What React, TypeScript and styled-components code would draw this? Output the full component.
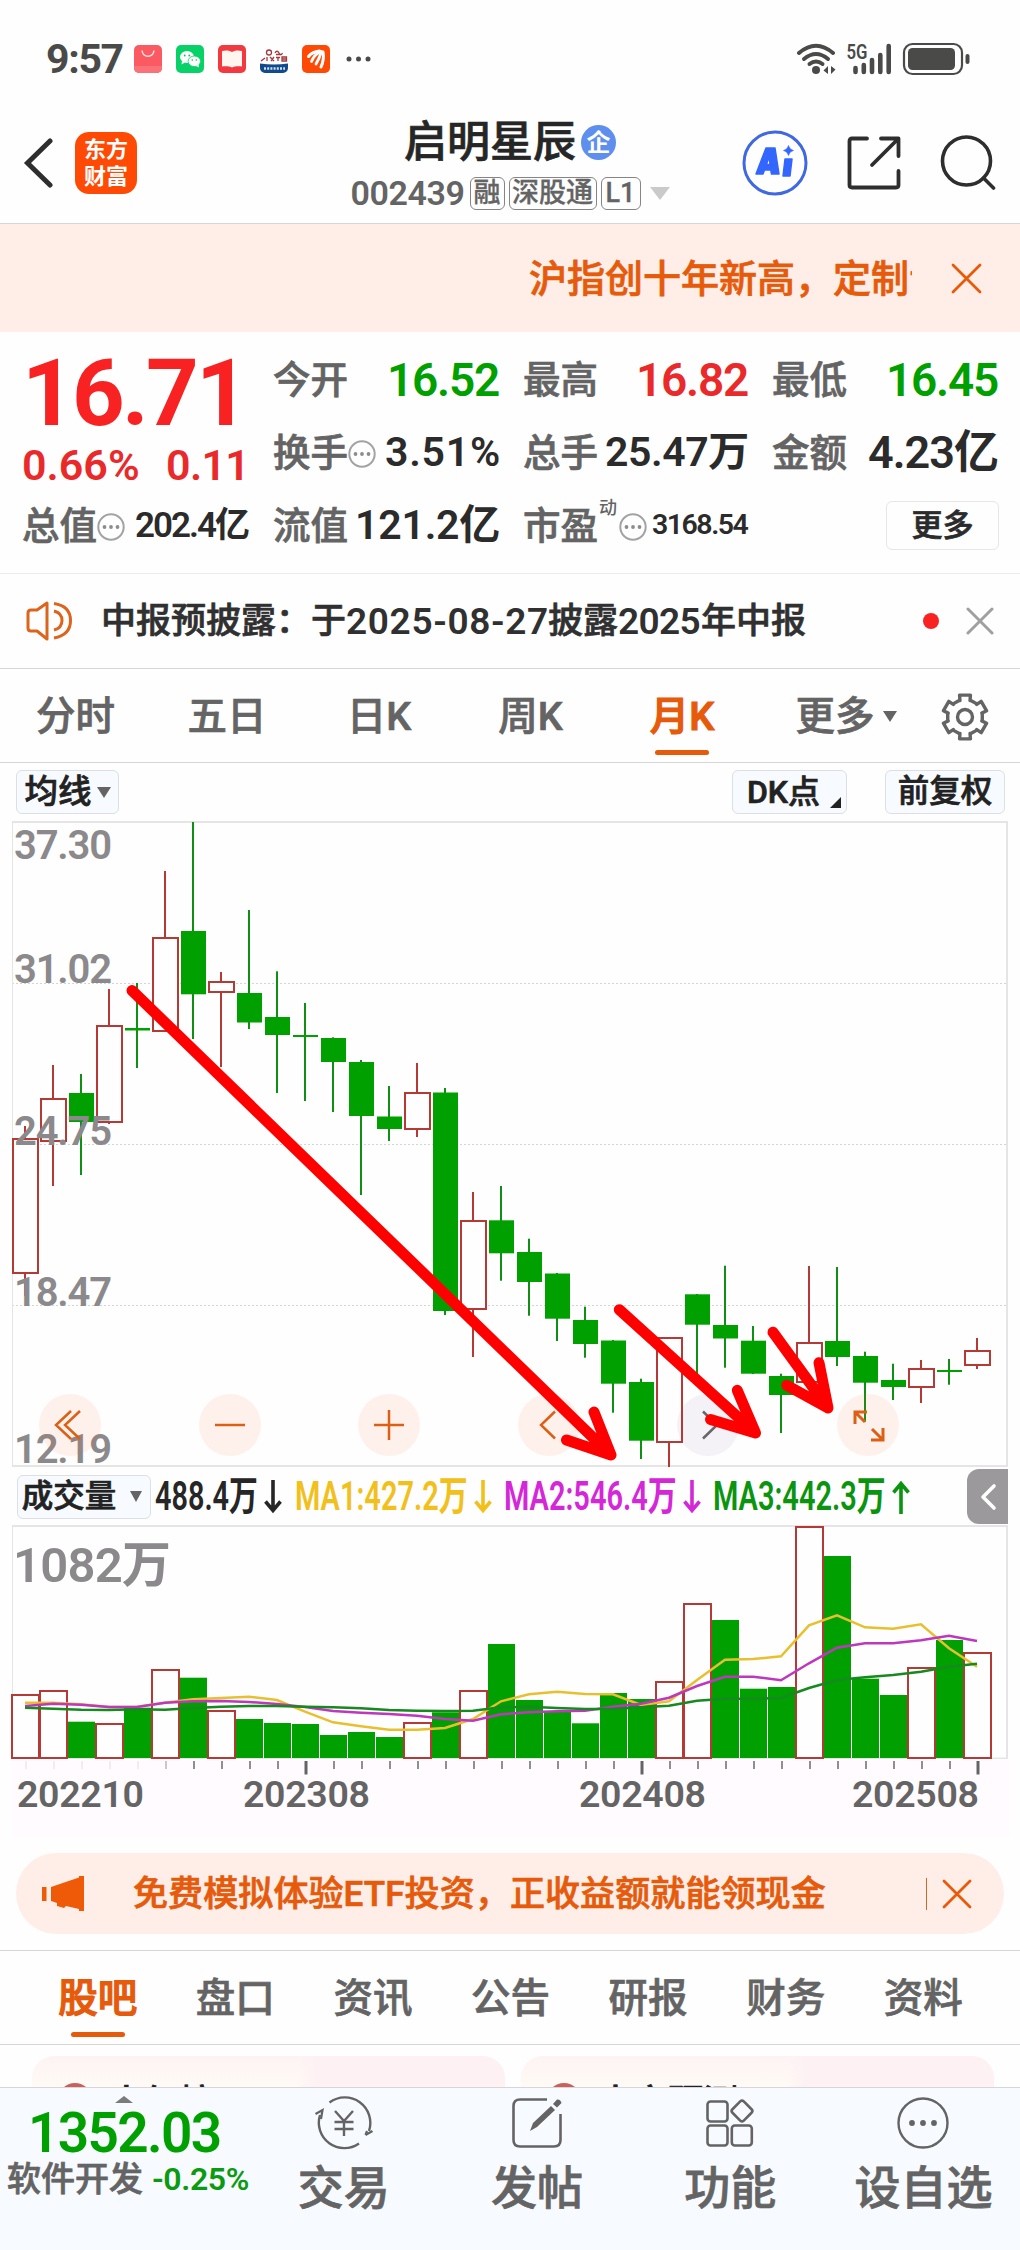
import React, { useLayoutEffect, useRef, useState } from 'react';
import styled, { createGlobalStyle } from 'styled-components';

const C = {
  red: '#f82222',
  red2: '#ea2a2a',
  green: '#00a000',
  orange: '#e65a0c',
  ink: '#2b2b2b',
  gray: '#646464',
  line: '#d6d6d8',
  frame: '#e5e5e7',
  candleRed: '#b53a36',
  peach: '#ffeee7',
};

const Global = createGlobalStyle`
  * { box-sizing: border-box; }
  body {
    margin: 0;
    background: #fefefe;
    font-family: Roboto, "Noto Sans CJK SC", sans-serif;
    font-weight: 500;
    line-height: 1;
    color: ${C.ink};
    -webkit-font-smoothing: antialiased;
    -webkit-text-stroke: 0.7px currentColor;
  }
  svg { display: block; flex: none; }
  svg text { -webkit-text-stroke: 0; }
`;

/* ---------- text that adapts to the room it is given ---------- */

const FitBox = styled.span<{ $w: number }>`
  display: inline-block;
  width: ${(p) => p.$w}px;
  white-space: nowrap;
  flex: none;
  text-align: left;
`;
const FitInner = styled.span`
  display: inline-block;
  transform-origin: 0 50%;
`;

function Fit({ w, squeeze, children }: { w: number; squeeze?: boolean; children: string }) {
  const ref = useRef<HTMLSpanElement>(null);
  const [natural, setNatural] = useState(0);
  useLayoutEffect(() => {
    if (ref.current) setNatural(ref.current.offsetWidth);
  }, []);
  let style: React.CSSProperties = {};
  if (natural) {
    style = squeeze
      ? { transform: `scaleX(${w / natural})` }
      : { letterSpacing: (w - natural) / (children.length - 1) };
  }
  return (
    <FitBox $w={w}>
      <FitInner ref={ref} style={style}>
        {children}
      </FitInner>
    </FitBox>
  );
}

const Num = styled.span<{ $s: number; $c?: string; $b?: number }>`
  font-size: ${(p) => p.$s}px;
  color: ${(p) => p.$c || C.ink};
  font-weight: ${(p) => p.$b || 600};
  display: inline-flex;
  -webkit-text-stroke: 0;
`;

/* ---------- header ---------- */

const Page = styled.div`
  width: 1020px;
  height: 2250px;
  overflow: hidden;
  display: flex;
  flex-direction: column;
  background: #fefefe;
`;

const StatusBar = styled.div`
  height: 118px;
  flex: none;
  display: flex;
  align-items: center;
  padding: 0 48px 0 46px;
`;
const AppIcons = styled.div`
  display: flex;
  gap: 14px;
  margin-left: 10px;
`;
const MoreDots = styled.svg`
  margin-left: 16px;
`;
const StatusRight = styled.div`
  margin-left: auto;
  display: flex;
  align-items: center;
`;

const NavBar = styled.div`
  height: 106px;
  flex: none;
  display: grid;
  grid-template-columns: 340px 340px 1fr;
  border-bottom: 1px solid ${C.line};
`;
const NavLeft = styled.div`
  display: flex;
  align-items: center;
  padding: 0 0 16px 23px;
  gap: 22px;
`;
const Brand = styled.div`
  width: 62px;
  height: 62px;
  border-radius: 14px;
  background: #ff4a05;
  color: #fff;
  font-size: 22px;
  font-weight: 700;
  line-height: 27px;
  text-align: center;
  padding-top: 4px;
  -webkit-text-stroke: 0;
`;
const NavMid = styled.div`
  display: flex;
  flex-direction: column;
  align-items: center;
`;
const Title = styled.div`
  display: flex;
  align-items: center;
  font-size: 43px;
  gap: 5px;
  height: 48px;
  margin-bottom: 10px;
  color: #262626;
`;
const Badge = styled.span`
  width: 35px;
  height: 35px;
  border-radius: 50%;
  background: #5f8fee;
  color: #fff;
  font-size: 24px;
  font-weight: 700;
  line-height: 36px;
  text-align: center;
  -webkit-text-stroke: 0;
`;
const Sub = styled.div`
  display: flex;
  align-items: center;
  color: ${C.gray};
  -webkit-text-stroke: 0.3px currentColor;
`;
const Tag = styled.span<{ $w: number }>`
  width: ${(p) => p.$w}px;
  height: 33px;
  margin-left: 4px;
  border: 1.5px solid #858585;
  border-radius: 6px;
  font-size: 27px;
  line-height: 31px;
  text-align: center;
  white-space: nowrap;
`;
const NavRight = styled.div`
  display: flex;
  align-items: center;
  padding: 0 0 16px 62px;
  gap: 39px;
`;

const Caret = styled.i<{ $w: number; $h: number; $c: string; $ml?: number }>`
  width: 0;
  height: 0;
  flex: none;
  margin-left: ${(p) => p.$ml || 0}px;
  border-left: ${(p) => p.$w / 2}px solid transparent;
  border-right: ${(p) => p.$w / 2}px solid transparent;
  border-top: ${(p) => p.$h}px solid ${(p) => p.$c};
`;

const Ticker = styled.div`
  height: 108px;
  flex: none;
  display: flex;
  align-items: center;
  background: ${C.peach};
  color: ${C.orange};
  font-size: 38px;
  padding-left: 529px;
`;
const TickerText = styled.div`
  width: 383px;
  overflow: hidden;
  white-space: nowrap;
  padding: 8px 0 6px;
  margin-right: 39px;
`;

/* ---------- quote ---------- */

const Quote = styled.div`
  height: 242px;
  flex: none;
  display: grid;
  grid-template-columns: 228px 227px 226px 227px;
  grid-template-rows: 73px 73px 73px;
  column-gap: 23px;
  padding: 11px 0 0 22px;
  border-bottom: 1px solid #ebebed;
`;
const Price = styled.div`
  grid-row: span 2;
  display: flex;
  flex-direction: column;
  align-items: flex-start;
`;
const BigPrice = styled.div`
  padding: 5px 0 0 0;
  height: 101px;
`;
const Change = styled.div`
  display: flex;
  gap: 26px;
`;
const Cell = styled.div`
  display: flex;
  align-items: center;
  justify-content: space-between;
`;
const Label = styled.span`
  display: inline-flex;
  align-items: center;
  padding-top: 2px;
  color: ${C.gray};
  font-size: 37.5px;
  white-space: nowrap;
`;
const Sup = styled.sup`
  font-size: 18px;
  align-self: flex-start;
  margin: -9px 2px 0 1px;
  -webkit-text-stroke: 0;
`;
const MoreBtn = styled.div`
  width: 113px;
  height: 49px;
  border: 1.5px solid #e6e5e8;
  border-radius: 6px;
  margin-left: auto;
  font-size: 31px;
  line-height: 47px;
  text-align: center;
`;

const News = styled.div`
  height: 95px;
  flex: none;
  display: flex;
  align-items: center;
  padding-left: 26px;
  border-bottom: 1px solid ${C.line};
`;
const NewsText = styled.div`
  width: 746px;
  margin-left: 29px;
  display: flex;
  align-items: center;
  font-size: 35px;
  color: #303030;
`;
const Dot = styled.i`
  width: 16px;
  height: 16px;
  border-radius: 50%;
  background: ${C.red};
  margin-left: 76px;
  margin-right: 27px;
`;

/* ---------- tabs ---------- */

const Tabs = styled.div<{ $pad?: string; $top?: boolean }>`
  height: ${(p) => (p.$top ? 95 : 94)}px;
  flex: none;
  display: flex;
  padding: ${(p) => p.$pad || 0};
  border-bottom: 1px solid ${C.line};
  border-top: ${(p) => (p.$top ? `1px solid ${C.line}` : 'none')};
`;
const Tab = styled.div<{ $w: number; $on?: boolean }>`
  width: ${(p) => p.$w}px;
  display: flex;
  align-items: center;
  justify-content: center;
  position: relative;
  padding-top: 2px;
  font-size: 39.5px;
  color: ${(p) => (p.$on ? C.orange : C.gray)};
  -webkit-text-stroke-width: ${(p) => (p.$on ? 1.2 : 0.7)}px;
  &::after {
    content: '';
    display: ${(p) => (p.$on ? 'block' : 'none')};
    position: absolute;
    left: 50%;
    bottom: 7px;
    width: 54px;
    height: 5px;
    margin-left: -27px;
    border-radius: 3px;
    background: ${C.orange};
  }
`;

/* ---------- chart ---------- */

const ChartBar = styled.div`
  height: 58px;
  flex: none;
  display: flex;
  align-items: center;
  padding: 0 15px 0 16px;
`;
const Chip = styled.div<{ $w: number; $ml?: string; $fs: number; $pr?: number }>`
  position: relative;
  width: ${(p) => p.$w}px;
  height: 44px;
  flex: none;
  display: flex;
  align-items: center;
  justify-content: center;
  padding-right: ${(p) => p.$pr || 0}px;
  margin-left: ${(p) => p.$ml || 0};
  border: 1px solid #dcdfe6;
  border-radius: 6px;
  background: #f7faff;
  font-size: ${(p) => p.$fs}px;
  color: #222;
  white-space: nowrap;
`;
const Corner = styled.i`
  position: absolute;
  right: 5px;
  bottom: 5px;
  border-left: 11px solid transparent;
  border-bottom: 11px solid #222;
`;
const ChartWrap = styled.div`
  position: relative;
  height: 647px;
  flex: none;
`;
const Controls = styled.div`
  position: absolute;
  left: 39px;
  width: 860px;
  bottom: 12px;
  display: flex;
  justify-content: space-between;
`;
const Round = styled.div<{ $dim?: boolean }>`
  width: 62px;
  height: 62px;
  border-radius: 50%;
  background: ${(p) => (p.$dim ? 'rgba(120,70,150,0.07)' : 'rgba(255,90,30,0.08)')};
`;
const Overlay = styled.svg`
  position: absolute;
  left: 0;
  top: 0;
`;
const IndicatorBar = styled.div`
  height: 57px;
  flex: none;
  display: flex;
  align-items: center;
  padding: 0 12px 0 17px;
`;
const Indicator = styled.div<{ $c: string; $ml: number }>`
  display: flex;
  align-items: center;
  gap: 6px;
  margin-left: ${(p) => p.$ml}px;
  font-size: 40px;
  font-weight: 600;
  -webkit-text-stroke: 0;
  color: ${(p) => p.$c};
`;
const Collapse = styled.div`
  width: 41px;
  height: 55px;
  margin-left: auto;
  border-radius: 12px 0 0 12px;
  background: #9b999c;
  display: flex;
  align-items: center;
  justify-content: center;
`;
const Axis = styled.div`
  height: 78px;
  flex: none;
  margin: 0 11px 0 12px;
  background: #fffbff;
`;

/* ---------- lower part ---------- */

const Promo = styled.div`
  height: 81px;
  flex: none;
  margin: 16px 26px 16px 16px;
  width: 988px;
  border-radius: 41px;
  background: ${C.peach};
  color: ${C.orange};
  display: flex;
  align-items: center;
  padding-left: 26px;
`;
const PromoText = styled.div`
  font-size: 35px;
  margin-left: 48px;
  padding-top: 2px;
  width: 694px;
`;
const Bar = styled.i`
  width: 1px;
  height: 32px;
  background: #c9692e;
  margin: 0 15px 0 99px;
`;
const Cards = styled.div`
  height: 42px;
  flex: none;
  overflow: hidden;
  display: flex;
  gap: 16px;
  padding: 11px 26px 0 32px;
`;
const Card = styled.div`
  width: 473px;
  height: 120px;
  border-radius: 22px;
  background: linear-gradient(90deg, transparent 56%, #fdf1f4 60%), linear-gradient(180deg, #fdf3f4, #fffaf5 30px);
  display: flex;
  align-items: flex-start;
  padding: 27px 0 0 26px;
  font-size: 35px;
  color: #222;
`;
const CardDot = styled.i`
  width: 34px;
  height: 34px;
  border-radius: 50%;
  background: #c9605c;
  margin-right: 17px;
`;
const CardTitle = styled.span`
  padding-top: 3px;
`;

const BottomNav = styled.div`
  flex: 1;
  display: flex;
  background: #f7faff;
  border-top: 1px solid ${C.line};
`;
const IndexBox = styled.div`
  width: 247px;
  display: flex;
  flex-direction: column;
  align-items: flex-start;
  padding: 8px 0 0 7px;
`;
const UpMark = styled.i`
  width: 0;
  height: 0;
  margin-left: 108px;
  border-left: 9.5px solid transparent;
  border-right: 9.5px solid transparent;
  border-bottom: 7px solid #7b7b7b;
`;
const IndexValue = styled.div`
  margin: 3px 0 0 21px;
  height: 55px;
`;
const IndexRow = styled.div`
  display: flex;
  align-items: center;
  gap: 9px;
  margin-top: 1px;
  font-size: 34px;
  color: ${C.gray};
  white-space: nowrap;
`;
const NavItem = styled.div`
  flex: 1;
  display: flex;
  flex-direction: column;
  align-items: center;
  padding-top: 5px;
  gap: 12px;
  font-size: 46px;
  color: ${C.gray};
  svg { height: 60px; }
`;

/* ---------- icons ---------- */

const Cross = ({ s, c, w }: { s: number; c: string; w: number }) => (
  <svg width={s} height={s} viewBox={`0 0 ${s} ${s}`} stroke={c} strokeWidth={w} strokeLinecap="round">
    <path d={`M2 2L${s - 2} ${s - 2}M${s - 2} 2L2 ${s - 2}`} />
  </svg>
);

const Info = () => (
  <svg width="28" height="28" viewBox="0 0 28 28">
    <circle cx="14" cy="14" r="12.7" fill="none" stroke="#a3a3a3" strokeWidth="2" />
    {[7.5, 14, 20.5].map((x) => (
      <circle key={x} cx={x} cy="14" r="1.9" fill="#8c8c8c" />
    ))}
  </svg>
);

function Gear() {
  const pts: string[] = [];
  for (let i = 0; i < 6; i++) {
    const base = -90 + i * 60;
    [
      [-21, 17.5],
      [-17, 17.2],
      [-14, 22.5],
      [14, 22.5],
      [17, 17.2],
      [21, 17.5],
    ].forEach(([a, r]) => {
      const t = ((base + a) * Math.PI) / 180;
      pts.push(`${(25 + r * Math.cos(t)).toFixed(2)},${(25 + r * Math.sin(t)).toFixed(2)}`);
    });
  }
  return (
    <svg width="50" height="50" viewBox="0 0 50 50" fill="none" stroke={C.gray} strokeWidth="3.4" strokeLinejoin="round">
      <polygon points={pts.join(' ')} />
      <circle cx="25" cy="25" r="7.5" />
    </svg>
  );
}

const MaArrow = ({ up }: { up?: boolean }) => (
  <svg width="18" height="34" viewBox="0 0 18 34" fill="none" stroke="currentColor" strokeWidth="3.6">
    {up ? <path d="M9 34V3M1.5 12.5L9 3.5L16.5 12.5" /> : <path d="M9 0V31M1.5 21.5L9 30.5L16.5 21.5" />}
  </svg>
);

const StatusApps = () => (
  <AppIcons>
    <svg width="28" height="28" viewBox="0 0 28 28">
      <rect width="28" height="28" rx="5" fill="#fb5a62" />
      <path d="M0 21H28V23a5 5 0 0 1-5 5H5a5 5 0 0 1-5-5Z" fill="#fb7178" />
      <path d="M8 5.5C9 13 19 13 20 5.5" fill="none" stroke="#ffe3e0" strokeWidth="1.5" />
    </svg>
    <svg width="28" height="28" viewBox="0 0 28 28">
      <rect width="28" height="28" rx="5" fill="#07d267" />
      <ellipse cx="11" cy="12" rx="7" ry="6" fill="#fff" />
      <path d="M6 16L5.500 19.500L9 17.500Z" fill="#fff" />
      <ellipse cx="18.300" cy="16.300" rx="6.200" ry="5.300" fill="#fff" stroke="#07d267" strokeWidth=".8" />
      <path d="M20 21L23 22.500L22.500 19Z" fill="#fff" />
      <g fill="#07c160">
        <circle cx="8.700" cy="10.500" r=".9" />
        <circle cx="13.300" cy="10.500" r=".9" />
        <circle cx="16.300" cy="15" r=".8" />
        <circle cx="20.300" cy="15" r=".8" />
      </g>
    </svg>
    <svg width="28" height="28" viewBox="0 0 28 28">
      <rect width="28" height="28" rx="5" fill="#f4383f" />
      <path d="M4 6C8 5 12 5.500 14 7C16 5.500 20 5 24 6V21.500C20 21 16 21.500 14 22.500C12 21.500 8 21 4 21.500Z" fill="#fff6f0" />
    </svg>
    <svg width="28" height="28" viewBox="0 0 28 28">
      <g fill="none" stroke="#a3383c" strokeWidth="1.300">
        <circle cx="9" cy="7.500" r="2.500" />
        <path d="M15 8q2-3.500 4 0t3.500 0M16 9.500h5" />
        <path d="M1 16l4-3M7 12v4M10 12l4 4M14 12l-3 4M16 12.500h4M18 12v4M22 12h4.500v4h-4.500zM22 14h4" />
      </g>
      <path d="M0 18.500Q14 20.500 28 18.500V23a5 5 0 0 1-5 5H5a5 5 0 0 1-5-5Z" fill="#124a8c" />
      <path d="M4 23.500h21" stroke="#cfe0f2" strokeWidth="2.500" strokeDasharray="2 1.200" />
    </svg>
    <svg width="28" height="28" viewBox="0 0 28 28">
      <rect width="28" height="28" rx="5" fill="#ff4a05" />
      <g fill="none" stroke="#fff" strokeLinecap="round">
        <path d="M6.500 11.500Q10 7 17.500 6" strokeWidth="3" />
        <path d="M9.500 16.500Q12 10 18.500 6.500" strokeWidth="2.800" />
        <path d="M14 19Q17.500 13 19.500 6.500" strokeWidth="2.800" />
        <path d="M19 22Q22.500 14 21 7" strokeWidth="3" />
      </g>
    </svg>
  </AppIcons>
);

const StatusSignals = () => (
  <StatusRight>
    <svg width="176" height="36" viewBox="796 41 176 36">
      <g fill="none" stroke="#4a4b49" strokeWidth="4" strokeLinecap="round">
        <path d="M799 53Q816 38.500 833 53" />
        <path d="M804 59Q816 49 828 59" />
        <path d="M809.500 64Q816 59 822.500 64" />
      </g>
      <circle cx="816" cy="70" r="4" fill="#4a4b49" />
      <path d="M828 66V74L823.500 70.500ZM831 66V74L835.500 69.500Z" fill="#4a4b49" />
      <text x="846.500" y="59" fontSize="20.500" fontWeight="600" fill="#4a4b49" textLength="21" lengthAdjust="spacingAndGlyphs">5G</text>
      <g stroke="#4a4b49" strokeWidth="4.600" strokeLinecap="round">
        <path d="M855.500 68V72M863.800 65V72M872 60V72M880.300 55V72M888.700 46V72" />
      </g>
      <rect x="904" y="44" width="58" height="30" rx="8.500" fill="none" stroke="#4a4b49" strokeWidth="2.200" />
      <rect x="908" y="48" width="47" height="22" rx="4.500" fill="#4a4b49" />
      <rect x="965.500" y="54" width="4" height="10" rx="2" fill="#4a4b49" />
    </svg>
  </StatusRight>
);

/* ---------- chart data: pixel rows of high, body top, body bottom, low ---------- */

type K = [string, number, number, number, number];
const candles: K[] = [
  ['r', 1126, 1138, 1274, 1296],
  ['r', 1065, 1098, 1142, 1186],
  ['g', 1074, 1093, 1122, 1175],
  ['r', 989, 1025, 1123, 1124],
  ['g', 983, 1028, 1030.5, 1068],
  ['r', 871, 937, 1032, 1032],
  ['g', 822, 931, 994.3, 1039],
  ['r', 972, 981, 993, 1067],
  ['g', 910, 993, 1022.5, 1029],
  ['g', 971.3, 1017, 1035, 1093],
  ['g', 1003, 1035, 1037, 1101],
  ['g', 1037.3, 1038, 1062, 1112],
  ['g', 1060, 1062, 1116, 1195],
  ['g', 1086, 1116.5, 1129, 1141],
  ['r', 1063, 1092, 1130, 1137],
  ['g', 1088, 1092.5, 1311, 1315],
  ['r', 1192, 1220, 1310, 1357],
  ['g', 1186, 1220.3, 1253.3, 1280.7],
  ['g', 1238.7, 1252, 1282, 1315.7],
  ['g', 1273, 1273.5, 1318.7, 1341],
  ['g', 1306.7, 1320, 1344, 1357.7],
  ['g', 1340, 1340.5, 1383.7, 1412.7],
  ['g', 1378.7, 1382, 1440.7, 1459],
  ['r', 1338, 1337, 1443, 1467],
  ['g', 1294, 1294.3, 1324.7, 1377],
  ['g', 1265.7, 1325, 1338.5, 1367.7],
  ['g', 1326, 1340.7, 1373.7, 1374],
  ['g', 1373.7, 1376, 1395, 1433],
  ['r', 1266, 1342, 1383, 1383],
  ['g', 1267, 1341, 1357, 1366],
  ['g', 1351.7, 1356, 1382.7, 1421.7],
  ['g', 1363.7, 1380, 1387, 1400],
  ['r', 1360, 1368, 1388, 1403],
  ['g', 1359, 1370, 1372, 1384.7],
  ['r', 1338, 1350, 1366, 1369],
];
const volumes: [string, number][] = [
  ['r', 1694], ['r', 1690], ['g', 1721.7], ['r', 1723], ['g', 1707.7], ['r', 1669], ['g', 1677.7],
  ['r', 1710], ['g', 1719], ['g', 1723], ['g', 1724], ['g', 1735], ['g', 1732], ['g', 1737],
  ['r', 1722], ['g', 1712.3], ['r', 1690], ['g', 1644], ['g', 1700], ['g', 1712], ['g', 1723.3],
  ['g', 1693], ['g', 1699], ['r', 1681], ['r', 1603], ['g', 1620], ['g', 1688.7], ['g', 1687],
  ['r', 1526], ['g', 1556], ['g', 1678.7], ['g', 1695], ['r', 1667], ['g', 1640], ['r', 1652],
];
const ma1 = [728, 728, 733, 741, 740, 728, 718, 714, 710, 720, 755, 787, 799, 809, 809, 804, 777, 724, 703, 695, 702, 703, 735, 724, 660, 599, 597, 589, 496, 466, 502, 506, 493, 565, 620];
const ma2 = [738, 731, 734, 741, 741, 728, 724, 723, 726, 732, 741, 753, 758, 762, 767, 777, 782, 763, 757, 754, 752, 740, 731, 713, 678, 650, 650, 661, 610, 563, 550, 550, 541, 527, 543];
const ma3 = [743, 746, 749, 750, 748, 749, 744, 740, 738, 738, 740, 742, 745, 750, 752, 753, 752, 742, 740, 744, 747, 747, 742, 737, 722, 716, 716, 714, 684, 660, 652, 645, 635, 620, 611];

const cx = (i: number) => 25 + 28 * i;
const poly = (v: number[]) => v.map((y, i) => `${cx(i)},${(1460 + y / 3).toFixed(1)}`).join(' ');

const AxisText = ({ x, y, s, w, c, children }: { x: number; y: number; s: number; w: number; c: string; children: string }) => (
  <text x={x} y={y} fontSize={s} fontWeight="600" fill={c} textLength={w} lengthAdjust="spacing">
    {children}
  </text>
);

const PriceChart = () => (
  <svg width="1020" height="647" viewBox="0 821 1020 647">
    {[983.5, 1144.5, 1305.5].map((y) => (
      <path key={y} d={`M12 ${y}H1007`} stroke="#d4d4d4" strokeWidth="1" strokeDasharray="2 2" />
    ))}
    <path d="M12.500 822V1466" stroke={C.frame} strokeWidth="1" />
    <path d="M12 822H1007V1466H12" fill="none" stroke={C.frame} strokeWidth="2" />
    {candles.map(([t, hi, top, bot, lo], i) => {
      const x = cx(i);
      return t === 'g' ? (
        <g key={i} fill={C.green}>
          <rect x={x - 1} y={hi} width="2" height={lo - hi} fill="#0f8f14" />
          <rect x={x - 12} y={top} width="25" height={bot - top} />
        </g>
      ) : (
        <g key={i} stroke={C.candleRed} strokeWidth="2" fill="none">
          <path d={`M${x} ${hi}V${top}M${x} ${bot}V${lo}`} />
          <rect x={x - 12} y={top + 1} width="25" height={bot - top - 2} fill="#fefefe" />
        </g>
      );
    })}
    <AxisText x={14} y={859} s={40} w={98} c="#8b898b">37.30</AxisText>
    <AxisText x={14} y={983} s={40} w={98} c="#8b898b">31.02</AxisText>
    <AxisText x={14} y={1145} s={40} w={98} c="#8b898b">24.75</AxisText>
    <AxisText x={14} y={1306} s={40} w={98} c="#8b898b">18.47</AxisText>
    <AxisText x={14} y={1463} s={40} w={98} c="#8b898b">12.19</AxisText>
  </svg>
);

const glyphs = [
  'M32 17L17 31L32 45M41 17L26 31L41 45',
  'M16 31H46',
  'M16 31H46M31 16V46',
  'M37 17.500L23 31L37 44.500',
  'M26 17.500L40 31L26 44.500',
  'M18 30V18H30M18.500 18.500L28 28M34 46H46V34M45.500 45.500L35 35',
];

const arrows = [
  'M132 990.500L611 1455M594 1412L611 1455L566.500 1440',
  'M619.300 1309.700L755.500 1433M737.300 1390.300L755.500 1433L710.500 1419.500',
  'M773 1332.300L828 1408M819 1362.700L828 1408L786.700 1385.300',
];

const VolumeChart = () => (
  <svg width="1020" height="234" viewBox="0 1525 1020 234">
    <path d="M12.500 1526V1758" stroke={C.frame} strokeWidth="1" />
    <path d="M12 1526H1007V1758.500H12" fill="none" stroke={C.frame} strokeWidth="2" />
    {volumes.map(([t, top], i) => {
      const x = cx(i);
      return t === 'g' ? (
        <rect key={i} x={x - 13} y={top} width="27" height={1758 - top} fill={C.green} />
      ) : (
        <rect key={i} x={x - 13} y={top + 1} width="27" height={1757 - top} fill="#fefefe" stroke={C.candleRed} strokeWidth="2" />
      );
    })}
    <g fill="none" strokeWidth="2.500">
      <polyline points={poly(ma1)} stroke="#e8c02e" />
      <polyline points={poly(ma2)} stroke="#bd38bd" />
      <polyline points={poly(ma3)} stroke="#168a1e" />
    </g>
    <AxisText x={13} y={1582} s={49} w={158} c="#8b898b">1082万</AxisText>
  </svg>
);

const TimeAxis = () => (
  <Axis>
    <svg width="997" height="78" viewBox="12 1759 997 78">
      {candles.map((_, i) => {
        const major = i % 12 === 10;
        return (
          <path
            key={i}
            d={`M${cx(i) + 1} 1761V${major ? 1774.5 : 1769}`}
            stroke={i < 5 ? '#f1edf1' : i === 5 ? '#c9c9c9' : major ? C.gray : '#8f8f8f'}
            strokeWidth={major ? 3 : 2}
          />
        );
      })}
      <AxisText x={17} y={1807} s={37.5} w={127} c={C.gray}>202210</AxisText>
      <AxisText x={243} y={1807} s={37.5} w={127} c={C.gray}>202308</AxisText>
      <AxisText x={579} y={1807} s={37.5} w={127} c={C.gray}>202408</AxisText>
      <AxisText x={852} y={1807} s={37.5} w={127} c={C.gray}>202508</AxisText>
    </svg>
  </Axis>
);

export default function App() {
  return (
    <Page>
      <Global />
      <StatusBar>
        <Num $s={41} $b={700} $c="#4a4b49"><Fit w={78}>9:57</Fit></Num>
        <StatusApps />
        <MoreDots width="26" height="6" viewBox="0 0 26 6" fill="#4a4b49">
          <circle cx="3" cy="3" r="2.5" /><circle cx="12.500" cy="3" r="2.5" /><circle cx="22" cy="3" r="2.5" />
        </MoreDots>
        <StatusSignals />
      </StatusBar>
      <NavBar>
        <NavLeft>
          <svg width="30" height="52" viewBox="0 0 30 52" fill="none" stroke="#2e2e2e" strokeWidth="5" strokeLinecap="round">
            <path d="M27 4L4.500 26L27 48" />
          </svg>
          <Brand>东方<br />财富</Brand>
        </NavLeft>
        <NavMid>
          <Title>启明星辰<Badge>企</Badge></Title>
          <Sub>
            <Num $s={34} $c={C.gray}><Fit w={115}>002439</Fit></Num>
            <Tag $w={35}>融</Tag>
            <Tag $w={88}>深股通</Tag>
            <Tag $w={40}>L1</Tag>
            <Caret $w={20} $h={13} $c="#cacaca" $ml={9} />
          </Sub>
        </NavMid>
        <NavRight>
          <svg width="66" height="66" viewBox="0 0 66 66">
            <circle cx="33" cy="33" r="31" fill="none" stroke="#4068e0" strokeWidth="3" />
            <g fill="#3366ff" stroke="#3366ff" strokeWidth="1.500" strokeLinejoin="round">
              <path fillRule="evenodd" d="M14 44L24 18H33L37 44H29.500L28.800 40H22.500L21 44ZM24.500 34.500H28L27 26.500Z" />
              <path d="M43 29H50L48 46H41Z" />
              <path d="M46.500 15.500Q47.500 19.500 51.500 20.500Q47.500 21.500 46.500 25.500Q45.500 21.500 41.500 20.500Q45.500 19.500 46.500 15.500Z" strokeWidth=".6" />
            </g>
          </svg>
          <svg width="54" height="54" viewBox="0 0 54 54" fill="none" stroke="#2e2e2e" strokeWidth="3.800" strokeLinecap="round" strokeLinejoin="round">
            <path d="M20 2.500H5Q2.500 2.500 2.500 5V49Q2.500 51.500 5 51.500H49Q51.500 51.500 51.500 49V35M34 2.500H51.500V20M50.500 3.500L25 29" />
          </svg>
          <svg width="56" height="58" viewBox="0 0 56 58" fill="none" stroke="#2e2e2e" strokeWidth="3.600" strokeLinecap="round">
            <circle cx="26.500" cy="27" r="24" /><path d="M43.500 44L53.500 54" />
          </svg>
        </NavRight>
      </NavBar>
      <Ticker>
        <TickerText>沪指创十年新高，定制专</TickerText>
        <Cross s={31} c={C.orange} w={2.8} />
      </Ticker>
      <Quote>
        <Price>
          <BigPrice><Num $s={92} $c={C.red} $b={700}><Fit w={227}>16.71</Fit></Num></BigPrice>
          <Change>
            <Num $s={43} $c={C.red2}><Fit w={118}>0.66%</Fit></Num>
            <Num $s={43} $c={C.red2}><Fit w={84}>0.11</Fit></Num>
          </Change>
        </Price>
        <Cell><Label>今开</Label><Num $s={46} $c={C.green}><Fit w={113}>16.52</Fit></Num></Cell>
        <Cell><Label>最高</Label><Num $s={46} $c={C.red2}><Fit w={113}>16.82</Fit></Num></Cell>
        <Cell><Label>最低</Label><Num $s={46} $c={C.green}><Fit w={113}>16.45</Fit></Num></Cell>
        <Cell><Label>换手<Info /></Label><Num $s={41}><Fit w={115}>3.51%</Fit></Num></Cell>
        <Cell><Label>总手</Label><Num $s={41}><Fit w={144}>25.47万</Fit></Num></Cell>
        <Cell><Label>金额</Label><Num $s={45}><Fit w={131}>4.23亿</Fit></Num></Cell>
        <Cell><Label>总值<Info /></Label><Num $s={35}><Fit w={115}>202.4亿</Fit></Num></Cell>
        <Cell><Label>流值</Label><Num $s={41}><Fit w={145}>121.2亿</Fit></Num></Cell>
        <Cell><Label>市盈<Sup>动</Sup><Info /></Label><Num $s={28.5}><Fit w={97}>3168.54</Fit></Num></Cell>
        <Cell><MoreBtn>更多</MoreBtn></Cell>
      </Quote>
      <News>
        <svg width="46" height="42" viewBox="0 0 46 42" fill="none" stroke="#dc641c" strokeWidth="3" strokeLinejoin="round">
          <path d="M2 13Q2 10 5 10H11L21 3V39L11 31H5Q2 31 2 28ZM28 11Q36 13 36 20.500Q36 28 28 30M28 3.500Q44.500 6 44.500 20.500Q44.500 35 28 38" />
        </svg>
        <NewsText>
          中报预披露：于
          <Num $s={37} $c="#303030"><Fit w={202}>2025-08-27</Fit></Num>
          披露
          <Num $s={37} $c="#303030"><Fit w={83}>2025</Fit></Num>
          年中报
        </NewsText>
        <Dot />
        <Cross s={28} c="#a0a0a0" w={3} />
      </News>
      <Tabs>
        <Tab $w={151}>分时</Tab>
        <Tab $w={152}>五日</Tab>
        <Tab $w={152}>日K</Tab>
        <Tab $w={151}>周K</Tab>
        <Tab $w={152} $on>月K</Tab>
        <Tab $w={176}>更多<Caret $w={14} $h={11} $c={C.gray} $ml={8} /></Tab>
        <Tab $w={61}><Gear /></Tab>
      </Tabs>
      <ChartBar>
        <Chip $w={103} $fs={33.5}>均线<Caret $w={14} $h={11} $c={C.gray} $ml={5} /></Chip>
        <Chip $w={115} $fs={32} $ml="auto" $pr={12}>DK点<Corner /></Chip>
        <Chip $w={120} $fs={31.5} $ml="38px">前复权</Chip>
      </ChartBar>
      <ChartWrap>
        <PriceChart />
        <Controls>
          {glyphs.map((d, i) => (
            <Round key={d} $dim={i === 4}>
              <svg width="62" height="62" viewBox="0 0 62 62" fill="none" stroke={i === 4 ? '#66676a' : '#dc5f16'} strokeWidth={i === 5 ? 3 : 2.5}>
                <path d={d} />
              </svg>
            </Round>
          ))}
        </Controls>
        <Overlay width="1020" height="647" viewBox="0 821 1020 647" fill="none" stroke="#ff0000" strokeWidth="11" strokeLinecap="round" strokeLinejoin="round">
          {arrows.map((d) => (
            <path key={d} d={d} />
          ))}
        </Overlay>
      </ChartWrap>
      <IndicatorBar>
        <Chip $w={134} $fs={31.5} $pr={4}>成交量<Caret $w={13} $h={11} $c={C.gray} $ml={14} /></Chip>
        <Indicator $c="#262626" $ml={4}><Fit w={103} squeeze>488.4万</Fit><MaArrow /></Indicator>
        <Indicator $c="#f2c01c" $ml={13}><Fit w={173} squeeze>MA1:427.2万</Fit><MaArrow /></Indicator>
        <Indicator $c="#d428d8" $ml={12}><Fit w={173} squeeze>MA2:546.4万</Fit><MaArrow /></Indicator>
        <Indicator $c="#0b940f" $ml={12}><Fit w={173} squeeze>MA3:442.3万</Fit><MaArrow up /></Indicator>
        <Collapse>
          <svg width="18" height="28" viewBox="0 0 18 28" fill="none" stroke="#fff" strokeWidth="3.600" strokeLinecap="round" strokeLinejoin="round">
            <path d="M15 3L4 14L15 25" />
          </svg>
        </Collapse>
      </IndicatorBar>
      <VolumeChart />
      <TimeAxis />
      <Promo>
        <svg width="43" height="36" viewBox="0 0 43 36" fill="#ee5a08">
          <path d="M0 11H4.500V25H0ZM9 11L37 1.500V0H42V35H37V33L24 30L22 32L15 30V27L9 25Z" />
        </svg>
        <PromoText><Fit w={693}>免费模拟体验ETF投资，正收益额就能领现金</Fit></PromoText>
        <Bar />
        <Cross s={30} c={C.orange} w={2.8} />
      </Promo>
      <Tabs $pad="0 28px 0 29px" $top>
        {['股吧', '盘口', '资讯', '公告', '研报', '财务', '资料'].map((t, i) => (
          <Tab key={t} $w={137.6} $on={i === 0}>{t}</Tab>
        ))}
      </Tabs>
      <Cards>
        <Card><CardDot /><CardTitle>人气榜</CardTitle></Card>
        <Card><CardDot /><CardTitle>大家预测</CardTitle></Card>
      </Cards>
      <BottomNav>
        <IndexBox>
          <UpMark />
          <IndexValue><Num $s={55} $c={C.green}><Fit w={194}>1352.03</Fit></Num></IndexValue>
          <IndexRow>
            软件开发
            <Num $s={32} $c="#0b9a10"><Fit w={97}>-0.25%</Fit></Num>
          </IndexRow>
        </IndexBox>
        <NavItem>
          <svg width="60" viewBox="0 0 60 60" fill="none" stroke={C.gray} strokeWidth="2.400">
            <path d="M15.500 9.500A25.500 25.500 0 0 1 55 38M45 50.500A25.500 25.500 0 0 1 6 22" />
            <path d="M1.500 21L8.500 17L7 26M51.500 42L53 38M51.500 42L58.500 38" strokeWidth="2.200" />
            <path d="M21 18L30 28L39 18M30 28V43M20.500 29H39.500M20.500 36H39.500" />
          </svg>
          交易
        </NavItem>
        <NavItem>
          <svg width="60" viewBox="0 0 60 60" fill="none" stroke={C.gray} strokeWidth="2.600">
            <path d="M40 6.500H13Q6.500 6.500 6.500 13V47Q6.500 53.500 13 53.500H47Q53.500 53.500 53.500 47V21" />
            <path d="M23 38L26 30L44 13L48 17L30 34Z M46 11L50 6.500Q53.500 6 54.500 10L50 14.500Z" fill={C.gray} stroke="none" />
          </svg>
          发帖
        </NavItem>
        <NavItem>
          <svg width="60" viewBox="0 0 60 60" fill="none" stroke={C.gray} strokeWidth="2.600">
            <rect x="7.500" y="8.500" width="20" height="20" rx="3" />
            <rect x="7.500" y="32.500" width="20" height="20" rx="3" />
            <rect x="31.800" y="32.500" width="20" height="20" rx="3" />
            <rect x="34" y="10" width="16" height="16" rx="2.500" transform="rotate(45 42 18)" />
          </svg>
          功能
        </NavItem>
        <NavItem>
          <svg width="60" viewBox="0 0 60 60">
            <circle cx="30" cy="30" r="24.500" fill="none" stroke={C.gray} strokeWidth="2.400" />
            {[19, 30, 41].map((x) => (
              <circle key={x} cx={x} cy="30" r="2.900" fill={C.gray} />
            ))}
          </svg>
          设自选
        </NavItem>
      </BottomNav>
    </Page>
  );
}
